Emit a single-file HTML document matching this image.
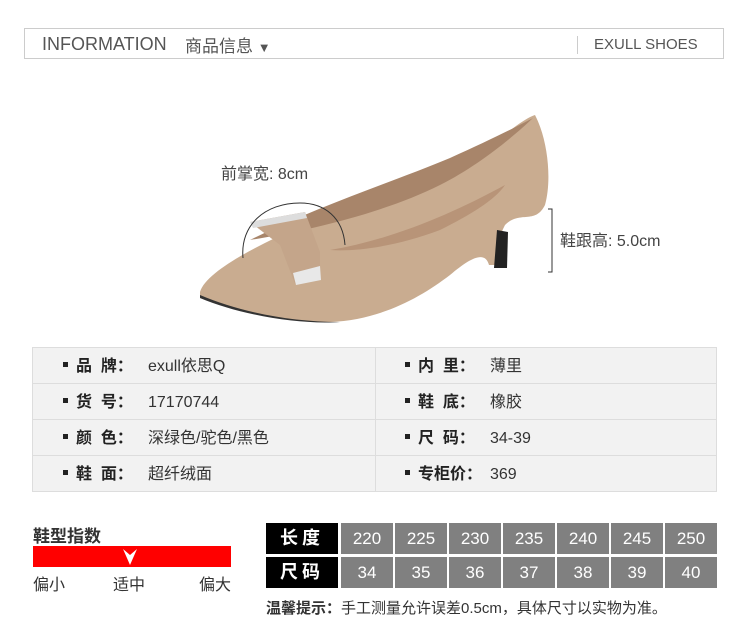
<!DOCTYPE html>
<html><head><meta charset="utf-8"><style>
body{margin:0;width:750px;height:642px;background:#fff;font-family:"Liberation Sans","Noto Sans CJK SC",sans-serif;position:relative;overflow:hidden;color:#444}
.a{position:absolute}
.hdr{left:24px;top:28px;width:700px;height:31px;border:1px solid #ccc;box-sizing:border-box}
.tb{left:32px;top:347px;width:685px;height:145px;background:#f2f2f2;border:1px solid #ddd;box-sizing:border-box}
.row{position:absolute;left:0;width:100%;height:1px;background:#ddd}
.cell{position:absolute;font-size:16px;color:#333;white-space:nowrap}
.cell b{font-weight:bold;color:#222;display:inline-block;width:72px}
.sq{display:inline-block;width:5px;height:5px;background:#222;margin-right:8px;vertical-align:middle;position:relative;top:-2px}
.g{position:absolute;width:52px;height:31px;background:#808080;color:#fff;font-size:17px;text-align:center;line-height:31px}
.k{position:absolute;width:72px;height:31px;background:#000;color:#fff;font-size:18px;font-weight:bold;text-align:center;line-height:31px;letter-spacing:4px}
</style></head><body>
<div class="a hdr"></div>
<div class="a" style="left:42px;top:34px;font-size:18px;color:#555">INFORMATION</div>
<div class="a" style="left:185px;top:32px;font-size:17px;color:#555">商品信息 <span style="font-size:13px">▼</span></div>
<div class="a" style="left:577px;top:36px;width:1px;height:18px;background:#ccc"></div>
<div class="a" style="left:594px;top:36px;font-size:15px;color:#555">EXULL SHOES</div>

<svg class="a" style="left:0;top:0" width="750" height="345">
<path d="M200,292 C205,275 240,255 275,238 C330,220 400,200 470,160 C500,140 520,120 535,115 C548,140 552,180 545,205 C535,225 520,210 505,225 C497,240 496,255 497,265 L489,265 C485,250 470,258 450,275 C420,298 380,320 330,322 C280,322 230,310 200,298 Z" fill="#c9ac90"/>
<path d="M250,240 C300,232 380,215 440,185 C480,165 515,135 533,118 C520,125 490,140 450,158 C390,183 320,205 250,240 Z" fill="#a8856a"/>
<path d="M330,250 C390,240 450,215 505,185 C495,200 470,215 440,230 C400,245 360,252 330,250Z" fill="#b89478"/>
<path d="M200,295 C240,312 290,322 340,322 C300,325 240,315 200,298Z" fill="#333"/>
<path d="M497,230 L508,232 L507,268 L494,268 Z" fill="#222"/>
<path d="M250,222 L305,212 L320,252 L320,278 L295,284 L280,245 Z" fill="#c4a58a"/>
<path d="M250,222 L305,212 L307,218 L253,228Z" fill="#ddd"/>
<path d="M293,273 L320,266 L321,280 L296,285Z" fill="#e8e8e8"/>
<path d="M243,258 C240,225 265,203 300,203 C325,203 343,218 345,245" fill="none" stroke="#333" stroke-width="1"/>
<path d="M548,209 L552,209 L552,272 L548,272" fill="none" stroke="#333" stroke-width="1"/>
<text x="221" y="179" font-size="16" fill="#444" font-family="Liberation Sans,Noto Sans CJK SC,sans-serif">前掌宽: 8cm</text>
<text x="560" y="246" font-size="16" fill="#444" font-family="Liberation Sans,Noto Sans CJK SC,sans-serif">鞋跟高: 5.0cm</text>
</svg>

<div class="a tb">
<div class="row" style="top:35px"></div><div class="row" style="top:71px"></div><div class="row" style="top:107px"></div>
<div style="position:absolute;left:342px;top:0;width:1px;height:100%;background:#ddd"></div>
<div class="cell" style="left:30px;top:4px"><span class="sq"></span><b>品 &nbsp;牌：</b>exull依思Q</div>
<div class="cell" style="left:30px;top:40px"><span class="sq"></span><b>货 &nbsp;号：</b>17170744</div>
<div class="cell" style="left:30px;top:76px"><span class="sq"></span><b>颜 &nbsp;色：</b>深绿色/驼色/黑色</div>
<div class="cell" style="left:30px;top:112px"><span class="sq"></span><b>鞋 &nbsp;面：</b>超纤绒面</div>
<div class="cell" style="left:372px;top:4px"><span class="sq"></span><b>内 &nbsp;里：</b>薄里</div>
<div class="cell" style="left:372px;top:40px"><span class="sq"></span><b>鞋 &nbsp;底：</b>橡胶</div>
<div class="cell" style="left:372px;top:76px"><span class="sq"></span><b>尺 &nbsp;码：</b>34-39</div>
<div class="cell" style="left:372px;top:112px"><span class="sq"></span><b>专柜价：</b>369</div>
</div>

<div class="a" style="left:33px;top:522px;font-size:17px;font-weight:bold;color:#333">鞋型指数</div>
<div class="a" style="left:33px;top:546px;width:198px;height:21px;background:#ff0000"></div>
<svg class="a" style="left:122px;top:547px" width="16" height="20"><path d="M1,2 L8,8 L15,2 L8,18Z" fill="#fff"/></svg>
<div class="a" style="left:33px;top:571px;font-size:16px;color:#333">偏小</div>
<div class="a" style="left:113px;top:571px;font-size:16px;color:#333">适中</div>
<div class="a" style="left:199px;top:571px;font-size:16px;color:#333">偏大</div>

<div class="k" style="left:266px;top:523px">长度</div>
<div class="k" style="left:266px;top:557px">尺码</div>
<div class="g" style="left:341px;top:523px">220</div><div class="g" style="left:395px;top:523px">225</div><div class="g" style="left:449px;top:523px">230</div><div class="g" style="left:503px;top:523px">235</div><div class="g" style="left:557px;top:523px">240</div><div class="g" style="left:611px;top:523px">245</div><div class="g" style="left:665px;top:523px">250</div>
<div class="g" style="left:341px;top:557px">34</div><div class="g" style="left:395px;top:557px">35</div><div class="g" style="left:449px;top:557px">36</div><div class="g" style="left:503px;top:557px">37</div><div class="g" style="left:557px;top:557px">38</div><div class="g" style="left:611px;top:557px">39</div><div class="g" style="left:665px;top:557px">40</div>
<div class="a" style="left:266px;top:597px;font-size:15px;color:#333"><b>温馨提示：</b>手工测量允许误差0.5cm，具体尺寸以实物为准。</div>
</body></html>
